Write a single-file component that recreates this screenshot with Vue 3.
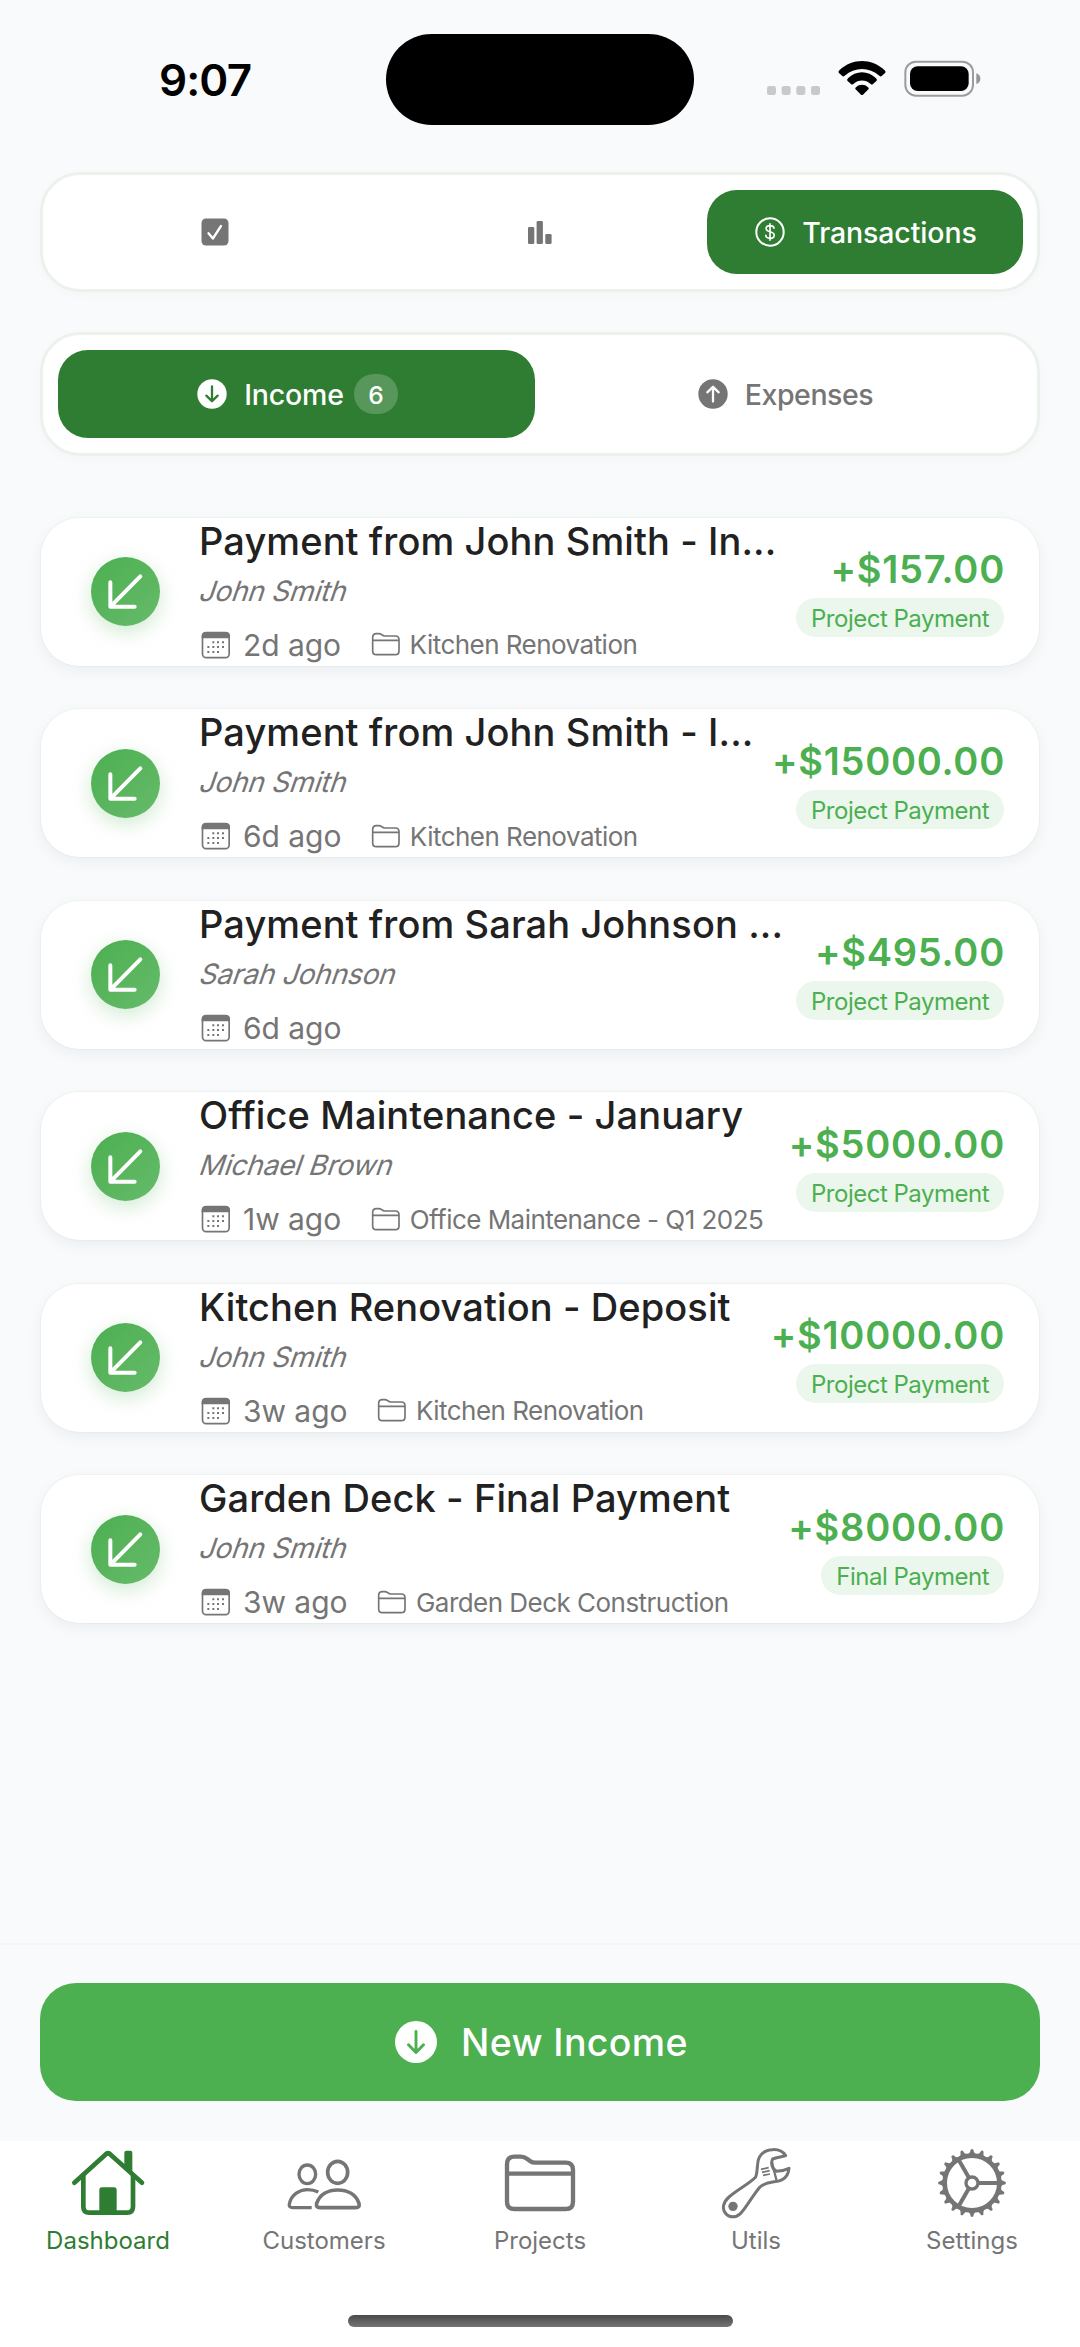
<script setup>
const items = [
  { title: 'Payment from John Smith - In...', who: 'John Smith', ago: '2d ago', project: 'Kitchen Renovation', amount: '+$157.00', tag: 'Project Payment' },
  { title: 'Payment from John Smith - I...', who: 'John Smith', ago: '6d ago', project: 'Kitchen Renovation', amount: '+$15000.00', tag: 'Project Payment' },
  { title: 'Payment from Sarah Johnson ...', who: 'Sarah Johnson', ago: '6d ago', project: '', amount: '+$495.00', tag: 'Project Payment' },
  { title: 'Office Maintenance - January', who: 'Michael Brown', ago: '1w ago', project: 'Office Maintenance - Q1 2025', amount: '+$5000.00', tag: 'Project Payment' },
  { title: 'Kitchen Renovation - Deposit', who: 'John Smith', ago: '3w ago', project: 'Kitchen Renovation', amount: '+$10000.00', tag: 'Project Payment' },
  { title: 'Garden Deck - Final Payment', who: 'John Smith', ago: '3w ago', project: 'Garden Deck Construction', amount: '+$8000.00', tag: 'Final Payment' },
]
const teeth = Array.from({ length: 20 }, (_, i) => i * 18)
</script>

<template>
  <div class="screen">
    <header class="status">
      <div class="time">9:07</div>
      <div class="island"></div>
      <div class="signals">
        <svg width="240" height="60" viewBox="0 0 720 180">
          <g fill="#c8c9ca">
            <rect x="0" y="105" width="27" height="27" rx="7" />
            <rect x="44" y="105" width="27" height="27" rx="7" />
            <rect x="88" y="105" width="27" height="27" rx="7" />
            <rect x="132" y="105" width="27" height="27" rx="7" />
          </g>
          <path d="M215 65Q213 62 217 58C257 21 313 21 353 58Q357 62 355 65L344 75Q341 78 337 74C307 47 263 47 233 74Q229 78 226 75Z" />
          <path d="M241 89Q239 86 243 82C266 58 304 58 327 82Q331 86 329 89L318 99Q315 102 311 99C296 85 274 85 259 99Q255 102 252 99Z" />
          <path d="M265 114Q264 111 267 109C276 99 294 99 303 109Q306 111 305 114L288 131Q285 133 282 131Z" />
          <rect x="415" y="32" width="203" height="102" rx="32" fill="none" stroke="#9b9c9d" stroke-width="6" />
          <rect x="429" y="46" width="176" height="74" rx="23" />
          <path d="M628 67Q640 71 640 83Q640 95 628 99Z" fill="#949596" />
        </svg>
      </div>
    </header>

    <nav class="bar main-tabs">
      <div class="tab">
        <svg width="28" height="28" viewBox="0 0 28 28"><rect x=".5" y=".5" width="27" height="27" rx="4.500" fill="#757575" /><path d="M7.500 15.200l4.400 5.300L20 8" fill="none" stroke="#fff" stroke-width="2.300" stroke-linecap="round" stroke-linejoin="round" /></svg>
      </div>
      <div class="tab">
        <svg width="24" height="24" viewBox="0 0 24 24" fill="#757575"><rect x="0" y="7" width="6.300" height="17" rx="1.300" /><rect x="8.600" y="1" width="6.300" height="23" rx="1.300" /><rect x="17.300" y="14" width="6.300" height="10" rx="1.300" /></svg>
      </div>
      <div class="tab on">
        <svg width="30" height="30" viewBox="0 0 30 30"><circle cx="15" cy="15" r="13.700" fill="none" stroke="#fff" stroke-width="2" /><path d="M19 11.200C18.700 9.400 17.200 8.600 15 8.600C12.600 8.600 11.100 9.800 11.100 11.600C11.100 13.500 12.600 14.200 15 14.800C17.500 15.400 19.200 16.100 19.200 18.200C19.200 20.200 17.400 21.300 15 21.300C12.500 21.300 10.900 20.200 10.800 18.300M15 6.800V23.100" fill="none" stroke="#fff" stroke-width="1.700" stroke-linecap="round" /></svg>
        <span class="t-trans">Transactions</span>
      </div>
    </nav>

    <nav class="bar kind-tabs">
      <div class="tab on">
        <svg width="30" height="30" viewBox="0 0 30 30"><circle cx="15" cy="15" r="14.700" fill="#fff" /><path d="M15 7.500V22M9.300 16.700L15 22.200L20.700 16.700" fill="none" stroke="#2e7d32" stroke-width="2.300" stroke-linecap="round" stroke-linejoin="round" /></svg>
        <span class="t-inc">Income</span>
        <span class="count">6</span>
      </div>
      <div class="tab">
        <svg width="30" height="30" viewBox="0 0 30 30"><circle cx="15" cy="15" r="14.700" fill="#757575" /><path d="M15 22.500V8M9.300 13.300L15 7.800L20.700 13.300" fill="none" stroke="#fff" stroke-width="2.300" stroke-linecap="round" stroke-linejoin="round" /></svg>
        <span class="t-exp">Expenses</span>
      </div>
    </nav>

    <main class="list">
      <article v-for="(it, i) in items" :key="i" class="card">
        <div class="disc">
          <svg width="69" height="69" viewBox="183 171 207 207"><path d="M331 229L242 319M241 247V320H314" fill="none" stroke="#fff" stroke-width="12" stroke-linecap="round" stroke-linejoin="round" /></svg>
        </div>
        <div class="info">
          <div class="title">{{ it.title }}</div>
          <div class="who"><span>{{ it.who }}</span></div>
          <div class="meta">
            <svg width="30" height="28" viewBox="514 393 90 84">
              <rect x="518.500" y="398" width="80" height="75" rx="11" fill="none" stroke="#757575" stroke-width="5" />
              <path d="M516 415V408Q516 396 528 396H589Q601 396 601 408V415Z" fill="#757575" />
              <path d="M548 427h6m8 0h6m9 0h6M533 441h6m9 0h6m8 0h6m9 0h6M533 456h6m9 0h6m8 0h6" stroke="#757575" stroke-width="6" />
            </svg>
            <span class="ago">{{ it.ago }}</span>
            <template v-if="it.project">
              <svg class="dir" width="30" height="25" viewBox="1020 397 90 75"><path d="M1025 413Q1025 402 1036 402H1043Q1048 402 1052 405Q1056 409 1062 409H1093Q1104 409 1104 420V454Q1104 465 1093 465H1036Q1025 465 1025 454ZM1025 422H1104" fill="none" stroke="#757575" stroke-width="5" /></svg>
              <span class="project">{{ it.project }}</span>
            </template>
          </div>
        </div>
        <div class="money">
          <div class="amount">{{ it.amount }}</div>
          <div class="tag">{{ it.tag }}</div>
        </div>
      </article>
    </main>

    <section class="action">
      <button class="new">
        <svg width="42" height="42" viewBox="0 0 42 42"><circle cx="21" cy="21" r="21" fill="#fff" /><path d="M21 10.500V31.500M13.500 23.800L21 31.500L28.500 23.800" fill="none" stroke="#4caf50" stroke-width="2.900" stroke-linecap="round" stroke-linejoin="round" /></svg>
        <span>New Income</span>
      </button>
    </section>

    <footer class="tabs">
      <div class="item on">
        <svg width="80" height="80" viewBox="204 30 240 240">
          <g fill="none" stroke="#2e7d32" stroke-width="14" stroke-linecap="round" stroke-linejoin="round"><path d="M223 155L316 71Q324 63 332 71L426 155" /><path d="M250 135V227Q250 245 268 245H381Q399 245 399 227V135" /></g>
          <path fill="#2e7d32" d="M298 245V177Q298 169 306 169H342Q350 169 350 177V245ZM373 112V65Q373 59 379 59H391Q397 59 397 65V132Z" />
        </svg>
        <span>Dashboard</span>
      </div>
      <div class="item">
        <svg width="80" height="80" viewBox="852 30 240 240" fill="none" stroke="#757575" stroke-width="11">
          <ellipse cx="922" cy="130" rx="25" ry="28" stroke-width="10" /><ellipse cx="1013" cy="124" rx="30" ry="33" />
          <path d="M960 230H1067Q1080 230 1077 217C1067 189 1041 177 1013 177C986 177 960 189 950 217Q947 230 960 230Z" />
          <path d="M955 183C945 178 934 176 922 176C900 176 874 190 868 219Q866 230 878 230H935" stroke-width="10" />
        </svg>
        <span>Customers</span>
      </div>
      <div class="item">
        <svg width="80" height="80" viewBox="300 30 240 240" fill="none" stroke="#757575" stroke-width="13"><path d="M321 100Q321 77 343 77H362Q373 77 382 84L390 90Q396 95 408 95H497Q519 95 519 117V212Q519 234 497 234H343Q321 234 321 212ZM321 128H519" /></svg>
        <span>Projects</span>
      </div>
      <div class="item">
        <svg width="80" height="80" viewBox="48 30 240 240" fill="none" stroke="#757575" stroke-width="9" stroke-linejoin="round">
          <path d="M257 74C246 57 231 55 217 56C191 57 175 74 173 98C171 114 172 126 167 138C150 157 112 176 87 198C70 213 65 232 76 246C88 262 109 260 121 248C139 229 160 191 178 170C190 158 206 154 222 152C246 151 264 139 267 112C256 117 244 121 230 121C217 115 211 96 218 84C230 79 244 78 257 74Z" />
          <path d="M216 93C219 112 226 130 230 151" stroke-width="7" /><path d="M183 115L206 110M186 124L209 119M189 133L210 129" stroke-width="5" />
          <circle cx="99" cy="226" r="14" fill="#757575" stroke="none" />
        </svg>
        <span>Utils</span>
      </div>
      <div class="item">
        <svg width="80" height="80" viewBox="696 30 240 240" fill="none" stroke="#757575" stroke-width="12">
          <circle cx="816" cy="156" r="82" stroke-width="14" /><circle cx="816" cy="156" r="18" stroke-width="10" />
          <path d="M835 156H898M806 139L775 85M806 173L775 227" />
          <path v-for="a in teeth" :key="a" d="M902 145Q907 151 916 152Q920 156 916 160Q907 161 902 167Z" fill="#757575" stroke="none" :transform="`rotate(${a} 816 156)`" />
        </svg>
        <span>Settings</span>
      </div>
    </footer>
    <div class="home"><div class="pill"></div></div>
  </div>
</template>

<style>
body { background: #f8fafc; }
</style>
<style scoped>
* { box-sizing: border-box; }
.screen { width: 1080px; height: 2347px; display: flex; flex-direction: column; overflow: hidden; background: #f8fafc; color: #757575; font-family: Inter, "Liberation Sans", sans-serif; white-space: nowrap; }
svg { display: block; flex: none; }
.status { display: grid; grid-template-columns: 386px 308px 386px; height: 172px; padding-top: 34px; align-items: start; }
.time { padding-left: 159px; margin-top: 18px; font-size: 44px; line-height: 56px; font-weight: 600; color: #000; letter-spacing: -0.9px; }
.island { height: 91px; border-radius: 46px; background: #000; }
.signals { padding: 17px 0 0 73px; }
.bar { display: flex; margin: 0 40px; background: #fff; border: 3px solid #ebf2ec; border-radius: 40px; box-shadow: 0 3px 12px rgba(0, 0, 0, .025); }
.tab { display: flex; flex: none; align-items: center; justify-content: center; font-size: 28.500px; font-weight: 500; }
.tab.on { background: #2e7d32; color: #fff; border-radius: 30px; }
.main-tabs { height: 120px; padding: 15px 14px; }
.main-tabs .tab { width: 316px; margin-right: 9px; }
.main-tabs .tab.on { margin-right: 0; padding-left: 2px; }
.main-tabs .t-trans { margin-left: 17px; letter-spacing: -0.12px; }
.kind-tabs { height: 124px; margin-top: 40px; padding: 15px; }
.kind-tabs .tab { width: 477px; }
.kind-tabs .tab.on { padding-left: 2px; }
.kind-tabs .tab + .tab { margin-left: 11px; padding-left: 2px; }
.t-inc { margin-left: 17px; letter-spacing: -0.15px; }
.t-exp { margin-left: 17px; letter-spacing: -0.45px; }
.count { width: 44px; height: 40px; margin-left: 10px; border-radius: 20px; background: rgba(255, 255, 255, .2); font-size: 24.500px; line-height: 42px; text-align: center; }
.list { display: flex; flex-direction: column; gap: 43.500px; margin: 61.500px 41px 0; }
.card { display: flex; height: 148px; padding: 0 35px 0 50px; border-radius: 38px; background: #fff; box-shadow: 0 0 0 1px rgba(76, 175, 80, .05), 0 5px 16px rgba(15, 30, 40, .055); }
.disc { width: 69px; height: 69px; margin-top: 39.500px; border-radius: 50%; background: linear-gradient(135deg, #4caf50, #66bb6a); box-shadow: 0 6px 20px rgba(76, 175, 80, .26); }
.info { flex: 1; min-width: 0; margin-left: 39px; }
.title { font-size: 38px; line-height: 46px; font-weight: 500; color: #212121; letter-spacing: .1px; }
.who { margin-top: 9px; font-size: 28px; line-height: 36px; letter-spacing: -0.2px; }
.who span { display: inline-block; margin-left: 2px; transform: skewX(-19deg); }
.meta { display: flex; align-items: center; height: 38px; margin: 17px 0 0 2px; }
.ago { margin-left: 12px; font-size: 30px; letter-spacing: -0.05px; }
.dir { margin-left: 30px; }
.project { margin-left: 8.500px; font-size: 26px; letter-spacing: -0.53px; }
.money { display: flex; flex-direction: column; align-items: flex-end; padding-top: 28.500px; color: #4caf50; }
.amount { font-size: 38px; line-height: 46px; font-weight: 600; letter-spacing: .75px; margin-right: -1px; }
.tag { height: 39px; margin-top: 6px; padding: 1px 15px 0; border-radius: 20px; background: #ebf7ec; font-size: 24px; line-height: 40px; letter-spacing: -0.5px; }
.action { margin-top: auto; height: 198px; padding: 38px 40px 0; border-top: 2px solid #f3f6f8; }
.new { display: flex; align-items: center; justify-content: center; width: 100%; height: 118px; padding: 0 0 0 3px; border: 0; border-radius: 36px; background: #4caf50; color: #fff; font: 500 37.500px Inter, sans-serif; letter-spacing: .35px; }
.new span { margin: 1px 0 0 24px; }
.tabs { display: flex; height: 140px; background: #fff; }
.item { width: 216px; display: flex; flex-direction: column; align-items: center; font-size: 24px; line-height: 30px; }
.item.on { color: #2e7d32; }
.item span { margin-top: 5px; }
.home { display: flex; justify-content: center; height: 66px; padding-top: 34px; background: #fff; }
.pill { width: 385px; height: 12px; border-radius: 6px; background: linear-gradient(#4a4a4a, #747474); }
</style>
